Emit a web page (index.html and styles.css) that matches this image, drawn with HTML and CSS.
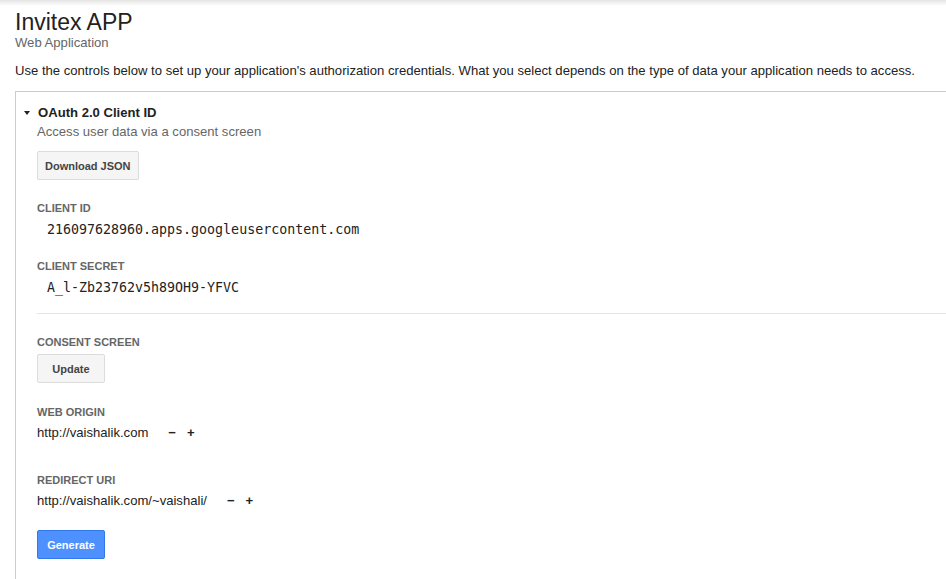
FILE: index.html
```html
<!DOCTYPE html>
<html lang="en">

<head>
  <meta charset="UTF-8" />
  <title>Invitex APP - Credentials</title>
  <link rel="stylesheet" href="styles.css">
</head>

<body>
  <div class="top-shadow"></div>

  <div class="page">
    <h1 class="app-title">Invitex APP</h1>
    <div class="app-type">Web Application</div>

    <p class="intro">Use the controls below to set up your application's authorization credentials. What you select depends on the type of data your application needs to access.</p>

    <div class="panel">
      <div class="panel-head">
        <span class="caret"></span>
        <span class="panel-title">OAuth 2.0 Client ID</span>
      </div>
      <div class="panel-body">
        <div class="panel-sub">Access user data via a consent screen</div>
        <button class="btn">Download JSON</button>

        <div class="field">
          <div class="label">CLIENT ID</div>
          <div class="code">216097628960.apps.googleusercontent.com</div>
        </div>

        <div class="field">
          <div class="label">CLIENT SECRET</div>
          <div class="code">A_l-Zb23762v5h89OH9-YFVC</div>
        </div>

        <hr class="sep">

        <div class="field first">
          <div class="label">CONSENT SCREEN</div>
          <button class="btn btn-small">Update</button>
        </div>

        <div class="field origin">
          <div class="label">WEB ORIGIN</div>
          <div class="uri">
            <span>http://vaishalik.com</span>
            <span class="ctl minus">&minus;</span>
            <span class="ctl">+</span>
          </div>
        </div>

        <div class="field wide">
          <div class="label">REDIRECT URI</div>
          <div class="uri">
            <span>http://vaishalik.com/~vaishali/</span>
            <span class="ctl minus">&minus;</span>
            <span class="ctl">+</span>
          </div>
        </div>

        <button class="btn btn-small btn-primary">Generate</button>
      </div>
    </div>
  </div>
</body>

</html>
```

FILE: styles.css
```css
body {
  margin: 0;
  font-family: "Liberation Sans", Arial, sans-serif;
  font-size: 13.1px;
  color: #222;
  background: #fff;
}

.top-shadow {
  height: 6px;
  background: linear-gradient(#e4e4e4, #fff);
}

.page {
  padding: 0 0 0 15px;
}

.app-title {
  margin: 3px 0 0;
  font-size: 23px;
  font-weight: normal;
  line-height: 26px;
}

.app-type {
  margin-top: 0;
  color: #666;
  line-height: 16px;
}

.intro {
  margin: 12px 0 0;
  line-height: 16px;
}

.panel {
  margin-top: 12px;
  border-top: 1px solid #ccc;
  border-left: 1px solid #ccc;
  padding-bottom: 20px;
}

.panel-head {
  display: flex;
  align-items: center;
  padding: 12px 0 0 8px;
  line-height: 17px;
}

.caret {
  width: 0;
  height: 0;
  border-left: 3px solid transparent;
  border-right: 3px solid transparent;
  border-top: 4px solid #222;
  margin-right: 8px;
}

.panel-title {
  font-weight: bold;
}

.panel-body {
  padding-left: 21px;
}

.panel-sub {
  margin-top: 3px;
  color: #666;
  line-height: 16px;
}

.btn {
  display: block;
  height: 29px;
  padding: 0 7px;
  margin-top: 11px;
  font-family: inherit;
  font-size: 11px;
  font-weight: bold;
  color: #444;
  background: #f5f5f5;
  border: 1px solid #dcdcdc;
  border-radius: 2px;
}

.btn-small {
  width: 68px;
  height: 29px;
  padding: 0;
}

.btn-primary {
  margin-top: 21px;
  color: #fff;
  background: #4d90fe;
  border-color: #3079ed;
}

.field {
  margin-top: 21px;
}

.field.first {
  margin-top: 21px;
}

.field.origin {
  margin-top: 22px;
}

.field.wide {
  margin-top: 32px;
}

.label {
  font-size: 11px;
  font-weight: bold;
  color: #666;
  line-height: 14px;
}

.code {
  margin: 7px 0 0 10px;
  font-family: "DejaVu Sans Mono", monospace;
  font-size: 13.3px;
  line-height: 16px;
}

.sep {
  margin: 17px 0 0;
  border: 0;
  border-top: 1px solid #e5e5e5;
}

.field .btn {
  margin-top: 5px;
}

.uri {
  margin-top: 6px;
  line-height: 16px;
  display: flex;
  align-items: center;
}

.ctl {
  font-weight: bold;
  margin-left: 11px;
}

.ctl.minus {
  margin-left: 20px;
}
```
